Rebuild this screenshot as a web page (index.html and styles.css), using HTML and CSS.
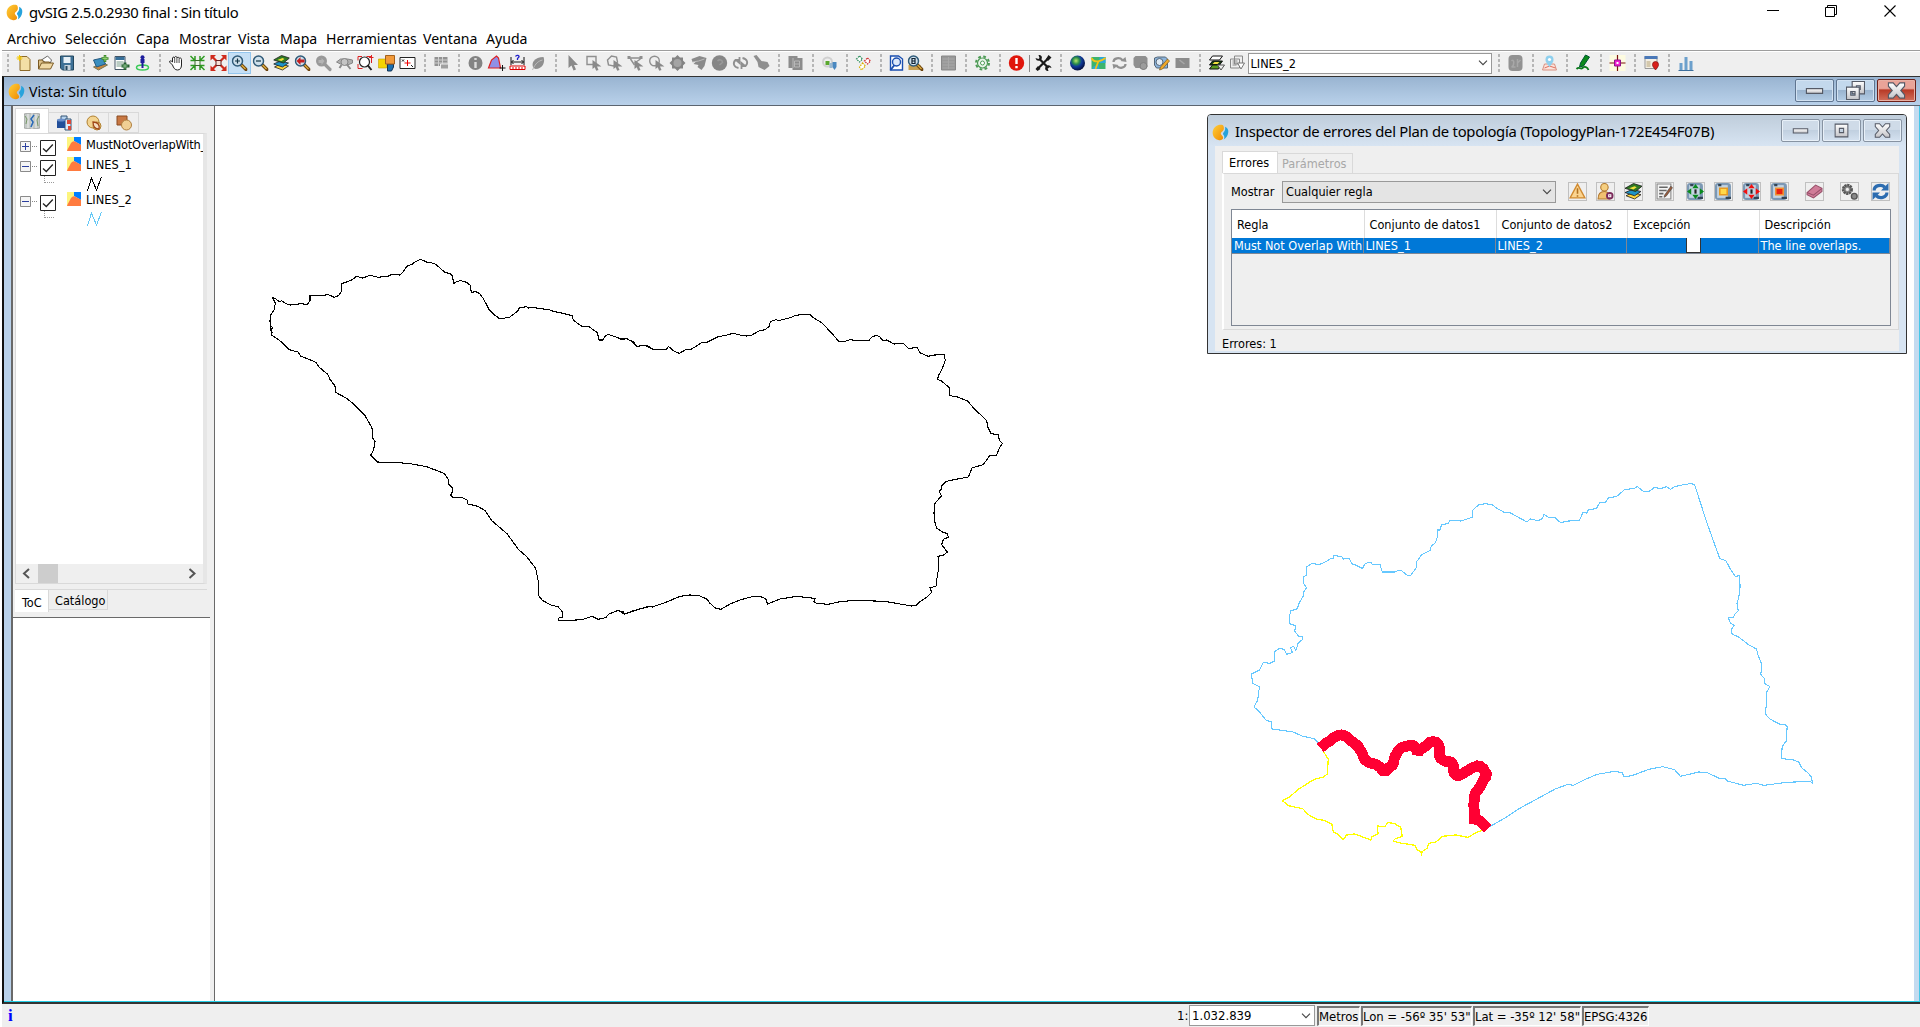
FILE: index.html
```html
<!DOCTYPE html>
<html lang="es">
<head>
<meta charset="utf-8">
<title>gvSIG 2.5.0.2930 final : Sin título</title>
<link rel="stylesheet" href="styles.css">
</head>
<body>
<svg class="defs" width="0" height="0">
<defs>
<linearGradient id="gold" x1="0" y1="0" x2="1" y2="1"><stop offset="0" stop-color="#ffcf3a"/><stop offset="1" stop-color="#f08a00"/></linearGradient>
<linearGradient id="metal" x1="0" y1="0" x2="0" y2="1"><stop offset="0" stop-color="#fff"/><stop offset="1" stop-color="#c4c4c8"/></linearGradient>
<radialGradient id="earth" cx=".4" cy=".35" r=".65"><stop offset="0" stop-color="#b8e86a"/><stop offset=".35" stop-color="#2a8c4a"/><stop offset=".6" stop-color="#103a9a"/><stop offset="1" stop-color="#051040"/></radialGradient>
<pattern id="hatch" width="2" height="2" patternUnits="userSpaceOnUse"><rect width="2" height="2" fill="#fff"/><rect width="1" height="1" fill="#22c"/><rect x="1" y="1" width="1" height="1" fill="#22c"/></pattern>
<symbol id="logo" viewBox="0 0 16 16"><path d="M9 .8C5.500.3 1.500 2.500.7 7c-.6 4 2 7.700 6 8.200 2 .2 3.800-.6 3.800-2.300C10.500 11 8.300 10.600 8.300 9s2.700-2 2.900-4.700C11.300 2.200 10.500 1 9 .8z" fill="url(#gold)"/><path d="M12.300 2.500c2.400 1 3.300 3 3 5.300-.4 3.200-2.200 5.800-4.200 6.700.8-1.500.7-3-.4-4.300-.8-1.100-.3-1.700.5-2.700 1.100-1.300 1.500-3 1.100-5z" fill="#27a3dc"/></symbol>
<symbol id="mag" viewBox="0 0 16 16"><path d="M9.500 9.500l5 5" stroke="#6e4510" stroke-width="3.200" stroke-linecap="round"/><path d="M10 10l4 4" stroke="#e0b040" stroke-width="1.300"/><circle cx="6" cy="6" r="5" fill="#cfe0ec" stroke="#2f5a78" stroke-width="1.500"/></symbol>
<symbol id="layers" viewBox="0 0 16 16"><path d="M1 12l6-3 8 2-6 4z" fill="#ffd83c" stroke="#222" stroke-width=".8"/><path d="M0 9l7-3 8 2-6 4z" fill="#1e94c8" stroke="#222" stroke-width=".8"/><path d="M0 5l8-4.500 8 2.500-6 5z" fill="#2f7a24" stroke="#222" stroke-width=".8"/><path d="M4 5l5-2 2 1-3 2z" fill="#f3e03c"/></symbol>
<symbol id="arrow" viewBox="0 0 16 16"><path d="M4 0v13l3-2.500 2 5 2.500-1-2-4.500h4z" fill="#8a8a8a"/></symbol>
<symbol id="sarrow" viewBox="0 0 16 16"><path d="M7 5v9l2.200-1.800 1.500 3.600 2.300-.8-1.500-3.500H16z" fill="#8a8a8a"/></symbol>
<symbol id="symb" viewBox="0 0 14 14"><path d="M0 0h7v14H0z" fill="#fdf57e"/><path d="M7 0h7v8L7 4z" fill="#0080ff"/><path d="M0 14c1-3 2-4 3-6 1-3 4-5 6-3 1 1 3 1 5 3v6z" fill="#ff7b3f"/></symbol>
<symbol id="zig" viewBox="0 0 16 14"><path d="M.5 14L4.500 1l5 12L14.500 0" fill="none" stroke="currentColor" shape-rendering="crispEdges"/></symbol>
<symbol id="plus" viewBox="0 0 11 11"><path d="M.5.5h10v10H.5z" fill="#f5f5f5" stroke="#8a8a8a"/><path d="M2 5.500h7M5.500 2v7" stroke="#2b3f9e"/></symbol>
<symbol id="minus" viewBox="0 0 11 11"><path d="M.5.5h10v10H.5z" fill="#f5f5f5" stroke="#8a8a8a"/><path d="M2 5.500h7" stroke="#2b3f9e"/></symbol>
<symbol id="check" viewBox="0 0 16 16"><path d="M.5.5h15v15H.5z" fill="#fff" stroke="#222"/><path d="M3 8.500l3.300 3 6.500-7" fill="none" stroke="#222" stroke-width="1.300"/></symbol>
<symbol id="chev" viewBox="0 0 10 6"><path d="M1 .7l4 4 4-4" fill="none" stroke="#444" stroke-width="1.100"/></symbol>
<symbol id="wmin" viewBox="0 0 20 20"><path d="M1.500 8h17v5h-17z" fill="url(#metal)" stroke="#555a66" stroke-width="1.200"/></symbol>
<symbol id="wmax" viewBox="0 0 20 20"><path d="M2.500 2.500h15v15h-15zM7.500 7.500v5h5v-5z" fill="url(#metal)" fill-rule="evenodd" stroke="#555a66" stroke-width="1.200"/></symbol>
<symbol id="wrest" viewBox="0 0 20 20"><path d="M6.500.5h13v13h-13zM11 5v4h4V5z" fill="url(#metal)" fill-rule="evenodd" stroke="#555a66" stroke-width="1.200"/><path d="M.5 6.500h13.500v13H.5zM5 11v4h4.500v-4z" fill="url(#metal)" fill-rule="evenodd" stroke="#555a66" stroke-width="1.200"/></symbol>
<symbol id="wx" viewBox="0 0 20 20"><path d="M1.500 2h5L10 6l3.500-4h5v3.500L14.500 10l4 4.500V18h-5L10 14l-3.500 4h-5v-3.500l4-4.500-4-4.500z" fill="url(#metal)" stroke="#555a66" stroke-width="1.200"/></symbol>
<symbol id="film" viewBox="0 0 16 16"><rect x="0" y="0" width="15" height="16" rx="3" fill="#7c98b4"/><path d="M2 2h10v12H2z" fill="#c4d4e2"/><path d="M3 2h3M10 14h5" stroke="#345" stroke-width="2"/></symbol>
</defs>
</svg>
<div class="app">
  <header class="titlebar">
    <svg class="logo"><use href="#logo"/></svg>
    <span>gvSIG 2.5.0.2930 final : Sin título</span>
    <svg class="winctl" viewBox="0 0 150 24"><path d="M17 10.500h12" stroke="#000"/><path d="M75.500 7.500h9v9h-9zM77.500 7V5.500h9v9H85" fill="none" stroke="#000"/><path d="M134.500 5.500l11 11m0-11l-11 11" stroke="#000" stroke-width="1.100"/></svg>
  </header>
  <nav class="menu"><span style="width:58px">Archivo</span><span style="width:71px">Selección</span><span style="width:43px">Capa</span><span style="width:59px">Mostrar</span><span style="width:42px">Vista</span><span style="width:46px">Mapa</span><span style="width:97px">Herramientas</span><span style="width:63px">Ventana</span><span>Ayuda</span></nav>
  <div class="toolbar">
    <div class="grp">
      <svg viewBox="0 0 16 16"><path d="M3.500 1.500h7l3 3v11h-10z" fill="#f3dfa6" stroke="#8c6a2a"/><path d="M3 0v6M0 3h6M1 1l4 4m0-4L1 5" stroke="#f4c800"/></svg>
      <svg viewBox="0 0 16 16"><path d="M4 5l6-4 4 4-2 5z" fill="#fff" stroke="#666"/><path d="M1 14V5h4l1 2h6v3" fill="#dcc088" stroke="#7a5a24"/><path d="M1 14l3-6h12l-3 6z" fill="#efd8a4" stroke="#7a5a24"/></svg>
      <svg viewBox="0 0 16 16"><path d="M2 1h13v14H4l-2-2z" fill="#3e7196" stroke="#24485f"/><path d="M5 2h7v6H5z" fill="#e8f1f7"/><path d="M6 10h6v5H6z" fill="#c7d4dd"/><path d="M7 11h2v4H7z" fill="#24485f"/></svg>
    </div>
    <div class="grp">
      <svg viewBox="0 0 16 16"><path d="M1 12l10-4 4 2-9 5z" fill="#c98840" stroke="#775"/><path d="M1 5l9-2 3 6-9 3z" fill="#3a8fc0" stroke="#265a80"/><path d="M12.500 0v7M9 3.500h7" stroke="#3f8a2a" stroke-width="2.600"/><path d="M12.500 1v5M10 3.500h5" stroke="#8fd070"/></svg>
      <svg viewBox="0 0 16 16"><path d="M1.500 1.500h10v13h-10z" fill="#fff" stroke="#456"/><path d="M2 2h9v3H2z" fill="#38709a"/><path d="M3 7h7M3 9h7M3 11h5" stroke="#798"/><path d="M11.500 7.500v7.500M8 11h8" stroke="#245f30" stroke-width="2.800"/><path d="M11.500 9v4.500M9 11h5" stroke="#8fc890"/></svg>
      <svg viewBox="0 0 16 16"><ellipse cx="8" cy="12.500" rx="6" ry="2.500" fill="none" stroke="#3ccb5a" stroke-width="1.500"/><path d="M6 4h4v4H9v5H7V8H6z" fill="#1d1d9c"/><circle cx="8" cy="2.300" r="2" fill="#1d1d9c"/></svg>
    </div>
    <div class="grp">
      <svg viewBox="0 0 16 16"><path d="M4 10L1 7c0-1.500 1.500-1.500 3 0V3c.5-1.500 2-1 2 0 0-2 2.500-2 2.500 0 .5-1.300 2-1 2 .5 1-1 2.500-.5 2.500 1V10c0 3-1.500 5-4 5s-4-2-5-5z" fill="#fff" stroke="#222"/><path d="M6.200 3v5M8.400 3v5M10.600 4v4" stroke="#222" stroke-width=".8"/></svg>
      <svg viewBox="0 0 16 16"><path d="M1 1l4 4M15 1l-4 4M1 15l4-4M15 15l-4-4M5.500 1v4.500H1M10.500 1v4.500H15M5.500 15v-4.500H1M10.500 15v-4.500H15" stroke="#2f9a22" stroke-width="1.500" fill="none"/><path d="M5.500 5.500h5v5h-5z" fill="#eef8e8" stroke="#3a6a2a"/></svg>
      <svg viewBox="0 0 16 16"><path d="M1 1l5 5M15 1l-5 5M1 15l5-5M15 15l-5-5" stroke="#cf2a1c" stroke-width="2.200"/><path d="M0 0h5.500L0 5.500zM16 0h-5.500L16 5.500zM0 16h5.500L0 10.500zM16 16h-5.500L16 10.500z" fill="#cf2a1c"/><path d="M5.500 5.500h5v5h-5z" fill="#f8e0d8" stroke="#622"/></svg>
      <svg class="on" viewBox="0 0 16 16"><use href="#mag"/><path d="M3.500 6h5M6 3.500v5" stroke="#134" stroke-width="1.200"/></svg>
      <svg viewBox="0 0 16 16"><use href="#mag"/><path d="M3.500 6h5" stroke="#134" stroke-width="1.200"/></svg>
      <svg viewBox="0 0 16 16"><use href="#layers"/></svg>
      <svg viewBox="0 0 16 16"><use href="#mag"/><path d="M2 6l4-4v2.500h4v3H6V10z" fill="#c42020"/></svg>
      <svg viewBox="0 0 16 16"><path d="M9.500 9.500l5 5" stroke="#999" stroke-width="3.200" stroke-linecap="round"/><circle cx="6" cy="6" r="5.500" fill="#999"/><path d="M9 6L6 3v2H3v3h3v2z" fill="#b4b4b4"/></svg>
      <svg viewBox="0 0 16 16"><path d="M0 7l4-3h7l5 1v3l-5 2-7-1z" fill="#b0b0b0" stroke="#858585"/><path d="M5 10l-2 3M10 9l4 5" stroke="#8a8a8a" stroke-width="2"/><circle cx="8" cy="7" r="3.500" fill="#c4c4c4" stroke="#858585"/></svg>
      <svg viewBox="0 0 16 16"><path d="M.5 5.500v-4h4M9 1.500h5M.500 9v4.500H5" fill="none" stroke="#d22"/><circle cx="7" cy="7" r="5" fill="#fff" stroke="#222" stroke-width="1.200"/><path d="M10 10l4 5" stroke="#222" stroke-width="2"/><path d="M14 0v8M11.500 2.500h4.500" stroke="#d22"/></svg>
      <svg viewBox="0 0 16 16"><path d="M9 9h6v3l-2 4H9z" fill="#1d70b0" stroke="#135"/><path d="M0 4h8v9H0z" fill="#f6d400" stroke="#c0a000" stroke-width=".6"/><path d="M7 .500h9v8.500H7z" fill="#f29a3a" stroke="#a3601c"/></svg>
      <svg viewBox="0 0 16 16"><path d="M.5 2.500h15v11H.5z" fill="#fff" stroke="#222"/><path d="M8 5v6M5 8h6" stroke="#e00"/><path d="M2.500 4.500l2 2m0-2l-2 2M11.500 10l2 2" stroke="#222"/></svg>
    </div>
    <div class="grp"><svg viewBox="0 0 16 16"><path d="M1 2h13v9H1z" fill="#929292"/><path d="M1 5h13M1 8h13M5 2v9M9 2v9" stroke="#d0d0d0"/><path d="M7 9h8v5H7z" fill="#a0a0a0" stroke="#eee"/></svg></div>
    <div class="grp">
      <svg viewBox="0 0 16 16"><circle cx="8" cy="8" r="7" fill="#848484"/><path d="M8 3v2M8 7v6" stroke="#ddd" stroke-width="2.400"/></svg>
      <svg viewBox="0 0 16 16"><path d="M0 13L3 5l5-4 2 2 2 10z" fill="url(#hatch)" stroke="#e02020" stroke-width="1.200"/><path d="M14 10v6M11 13h6" stroke="#111"/></svg>
      <svg viewBox="0 0 16 16"><path d="M6 1.500c1-2 4-1 3.500.5L8 3.500V5" fill="none" stroke="#22c" stroke-width="1.300"/><path d="M1.500 2v8M14.500 2v8M2 7h12M4 5L2 7l2 2M12 5l2 2-2 2" fill="none" stroke="#111"/><path d="M.500 11h15v3.500H.500z" fill="#fff" stroke="#d00"/><path d="M3.500 12v2M6.500 12v2M9.500 12v2M12.500 12v2" stroke="#d00"/></svg>
      <svg viewBox="0 0 16 16"><path d="M3 13C0 8 4 2 13 2c2 5-1 12-8 12z" fill="#8f8f8f"/><path d="M2 15C5 8 8 6 12 5" stroke="#bbb" fill="none"/></svg>
    </div>
    <div class="grp">
      <svg viewBox="0 0 16 16"><use href="#arrow"/></svg>
      <svg viewBox="0 0 16 16"><path d="M1.500 1.500h9v8h-9z" fill="none" stroke="#8f8f8f" stroke-width="1.400"/><use href="#sarrow"/></svg>
      <svg viewBox="0 0 16 16"><path d="M2 10L1 5l4-4 5 1 1 5-4 4z" fill="none" stroke="#8f8f8f" stroke-width="1.400"/><use href="#sarrow"/></svg>
      <svg viewBox="0 0 16 16"><path d="M2 3h11M3 4l4 6M13 4L7 8" fill="none" stroke="#8f8f8f" stroke-width="1.400"/><path d="M0 1h3v3H0zM12 1h3v3h-3z" fill="#8f8f8f"/><use href="#sarrow"/></svg>
      <svg viewBox="0 0 16 16"><circle cx="6" cy="6" r="4.800" fill="none" stroke="#8f8f8f" stroke-width="1.400"/><use href="#sarrow"/></svg>
      <svg viewBox="0 0 16 16"><path d="M8 0l2.500 2.500h3v3L16 8l-2.500 2.500v3h-3L8 16l-2.500-2.500h-3v-3L0 8l2.500-2.500v-3h3z" fill="#848484"/><circle cx="8" cy="8" r="4" fill="#a4a4a4"/></svg>
      <svg viewBox="0 0 16 16"><path d="M1 4l8-3 7 2-2 8-3 4-4-3 1-2-5-1 2-2H2z" fill="#8a8a8a"/><path d="M2 7l6-1 6-2" stroke="#bbb" fill="none"/></svg>
      <svg viewBox="0 0 16 16"><circle cx="8" cy="8" r="7.700" fill="#868686"/><path d="M6 6c2-2 5-1 5 1.500L8 10" stroke="#999" stroke-width="1.600" fill="none"/></svg>
      <svg viewBox="0 0 16 16"><path d="M6 13C1 12 0 8 3 5l4 0M10 3c5 1 6 5 3 8l-4 0M7 2v6L3.500 5M9 14V8l3.500 3" fill="none" stroke="#8f8f8f" stroke-width="1.800"/></svg>
      <svg viewBox="0 0 16 16"><path d="M0 1l3-1 5 6 6 1 2 4-5 4-6-3-1-5z" fill="#8f8f8f"/></svg>
    </div>
    <div class="grp"><svg viewBox="0 0 16 16"><path d="M1 1h9v2h5v12H5v-2H1z" fill="#8c8c8c"/><path d="M5.500 13V3M7 6h5v6H7zM7 9h5" fill="none" stroke="#b8b8b8"/></svg></div>
    <div class="grp"><svg viewBox="0 0 16 16"><circle cx="6" cy="7" r="4.500" fill="#eee" stroke="#d0d0d0" stroke-width="2"/><path d="M4 6h4v4H4z" fill="#5aa82e"/><path d="M8 8h3v5H8z" fill="#9ab8d0"/><path d="M11 7h4v5l-2 3-2-3z" fill="#4a88c0"/></svg></div>
    <div class="grp"><svg viewBox="0 0 16 16" fill="#fff" stroke-dasharray="1.500 1" stroke-width="1.200"><path d="M4 1l3 3-3 3-3-3z" stroke="#285"/><path d="M12 3l3 3-3 3-3-3z" stroke="#c22"/><path d="M7 8l3 3-4 4-2-3z" stroke="#d9b000"/></svg></div>
    <div class="grp narrow">
      <svg viewBox="0 0 16 16"><path d="M2 1h8l4 3v11H2z" fill="#fff" stroke="#1b4fb0" stroke-width="1.400"/><circle cx="8" cy="7" r="4" fill="#dce8fa" stroke="#1b4fb0" stroke-width="1.400"/><path d="M6 10l-4 5" stroke="#1b4fb0" stroke-width="2"/></svg>
      <svg viewBox="0 0 16 16"><path d="M1 10h12v5H1z" fill="#c9a050"/><use href="#mag"/><path d="M4.500 3.500v5h3v-5zM4.500 6h3" fill="none" stroke="#123" stroke-width="1.200"/></svg>
    </div>
    <div class="grp"><svg viewBox="0 0 16 16"><path d="M1 1h14v14H1z" fill="#989898" stroke="#888"/><path d="M2 4h12M2 7h12M2 10h12M2 13h12M8 2v12" stroke="#a8a8a8"/></svg></div>
    <div class="grp"><svg viewBox="0 0 16 16"><circle cx="8" cy="8" r="6.500" fill="none" stroke="#4c9a54" stroke-width="2" stroke-dasharray="2.700 2.400"/><circle cx="8" cy="8" r="5" fill="#eaf4ea" stroke="#4c9a54" stroke-width="1.200"/><circle cx="8" cy="8" r="2" fill="#fff" stroke="#4c9a54"/></svg></div>
    <div class="grp">
      <svg viewBox="0 0 16 16"><circle cx="8" cy="8" r="7.700" fill="#e0160c"/><path d="M8 3v6M8 11v2.200" stroke="#fff" stroke-width="2.400"/></svg><i class="bar"></i>
      <svg viewBox="0 0 16 16"><path d="M4 4l9 9M12 4l-9 9" stroke="#1a1a1a" stroke-width="2.200"/><path d="M0 3l3 1 1-1-1-3c3 0 4 2 3 4S1 7 0 3zM16 13l-3-1-1 1 1 3c-3 0-4-2-3-4s5-3 6 1zM10.500 4L13 0l3 2.500L12.500 6zM0 14l2 2 3-2-2.500-3z" fill="#1a1a1a"/></svg>
    </div>
    <div class="grp">
      <svg viewBox="0 0 16 16"><circle cx="8" cy="8" r="7.500" fill="url(#earth)"/></svg>
      <svg viewBox="0 0 16 16"><path d="M1 2h14v12H1z" fill="#3cb46c"/><path d="M9 2h6v6H9zM2 12l6-3 1 5H2z" fill="#2aa8d8"/><path d="M1 3c3 6 10 3 14 0M5 14l3-8" stroke="#f2c218" fill="none" stroke-width="1.800"/></svg>
      <svg viewBox="0 0 16 16"><path d="M2 7c0-4 6-5 9-2M14 9c0 4-6 5-9 2" fill="none" stroke="#909090" stroke-width="2.200"/><path d="M9 6l6 1-1-5zM7 10l-6-1 1 5z" fill="#909090"/></svg>
      <svg viewBox="0 0 16 16"><path d="M1 3l2-2h10l2 2v9l-4 3-4-2H3l-2-3z" fill="#8f8f8f"/><circle cx="11" cy="11" r="3.500" fill="#9c9c9c" stroke="#808080"/></svg>
      <svg viewBox="0 0 16 16"><path d="M1 3l3-1h8l2 2v9H3l-2-3z" fill="#8cb4dc" stroke="#567"/><circle cx="6" cy="7" r="3.500" fill="#dfeaf4" stroke="#567"/><path d="M14 4l2 2-7 8-3 1 1-3z" fill="#f0a828" stroke="#7a5a20" stroke-width=".7"/></svg>
      <svg viewBox="0 0 16 16"><path d="M1 3h14v10H1z" fill="#8c8c8c"/><path d="M5 5l5 4" stroke="#a8a8a8" stroke-width="1.500"/></svg>
    </div>
    <div class="grp">
      <svg viewBox="0 0 16 16"><path d="M4 1h10l-3 4H1z" fill="#fff" stroke="#111"/><path d="M4 6h10l-3 4H1z" fill="#123c12" stroke="#111"/><path d="M6 7h5l-2 2H4z" fill="#f4e040"/><path d="M4 10h8l-2 4H1z" fill="#5b9a22" stroke="#111"/><path d="M9 10h7l-3.500 5z" fill="#eee" stroke="#555"/></svg>
      <svg viewBox="0 0 16 16"><path d="M5 1h8v8H5zM1 4h9v9H1z" fill="#eee" stroke="#888"/><path d="M3 6h5M3 8h5M3 10h4" stroke="#888"/><path d="M8 8h7l-3.500 6z" fill="#fff" stroke="#777"/></svg>
      <div class="combo"><span>LINES_2</span><svg class="chev"><use href="#chev"/></svg></div>
    </div>
    <div class="grp"><svg viewBox="0 0 16 16"><rect x="1" y="0" width="14" height="16" rx="4" fill="#929292"/><path d="M4 6c3-3 3 5 0 6h4M10 4v8M10 8l3-3" fill="none" stroke="#a8a8a8" stroke-width="1.500"/></svg></div>
    <div class="grp"><svg viewBox="0 0 16 16"><path d="M3 9h10l2 6H1z" fill="#fbe4dc" stroke="#d89080"/><path d="M3 13l5-2 6 2" stroke="#e07060" fill="none"/><path d="M8 12C4 7 4 6 4 4.500a4 4 0 018 0C12 6 12 7 8 12z" fill="#8fd0ee"/><circle cx="8" cy="4.500" r="1.600" fill="#fff"/></svg></div>
    <div class="grp"><svg viewBox="0 0 16 16"><path d="M10 0l4 2-6 9-4 1 1-4z" fill="#0a8a1a" stroke="#053"/><path d="M1 14c3-3 4 1 6-1s5-1 6 2" fill="none" stroke="#0a7a1a" stroke-width="1.800"/></svg></div>
    <div class="grp"><svg viewBox="0 0 16 16"><path d="M0 0h16v16H0z" fill="#fdfbe0"/><path d="M8 0v16M0 8h16" stroke="#7a1010" stroke-width="1.200"/><path d="M5 5h6v6H5z" fill="#f020d0" stroke="#90108a"/><path d="M7 7h2v2H7z" fill="#fff"/></svg></div>
    <div class="grp"><svg viewBox="0 0 16 16"><path d="M1.500 1.500h12v12h-12z" fill="#f4efe4" stroke="#999"/><path d="M1 1h13v3H1z" fill="#4a78b8"/><path d="M3 6h4v6H3z" fill="#d4c8ac"/><path d="M12 15c-3-4-3-4-3-5.500a3 3 0 016 0c0 1.500 0 1.500-3 5.500z" fill="#d8201a" stroke="#801010" stroke-width=".7"/></svg></div>
    <div class="grp"><svg viewBox="0 0 16 16"><path d="M2 8h3v7H2zM7 2h3v13H7zM12 6h3v9h-3z" fill="#6ca0cc"/><path d="M1 15.500h15" stroke="#3d6f9c"/></svg></div>
  </div>
  <main class="desk">
    <div class="vhead">
      <svg class="logo"><use href="#logo"/></svg><span class="vtitle">Vista: Sin título</span>
      <div class="wb"><svg><use href="#wmin"/></svg></div><div class="wb"><svg><use href="#wrest"/></svg></div><div class="wb red"><svg><use href="#wx"/></svg></div>
    </div>
    <div class="vbody">
      <aside class="side">
        <section class="tocpane">
          <div class="icontabs">
            <span class="act"><svg viewBox="0 0 16 16"><path d="M0 1l4-1 4 1 4-1 4 1v14l-4 1-4-1-4 1-4-1z" fill="#c3c9c6" stroke="#888" stroke-width=".6"/><path d="M4 1v14M8 1v14M12 1v14" stroke="#eee"/><path d="M1 3l2 3-1 5M15 3l-2 4 1 6" stroke="#7a9a6a" fill="none"/><path d="M10 2l-3 4 2 3-2 5" stroke="#2a6ab8" stroke-width="1.600" fill="none"/></svg></span>
            <span><svg viewBox="0 0 16 16"><path d="M5 1h6v4H5z" fill="#b8d4ee" stroke="#357"/><path d="M9 4h6v11H9z" fill="#ddeafa" stroke="#357"/><path d="M11 5h4v4h-4zM12 11h3v4h-3z" fill="#d84a3a"/><path d="M1 5h8v8H1z" fill="#234f9a"/><ellipse cx="5" cy="5" rx="4" ry="1.500" fill="#6a90cc"/></svg></span>
            <span><svg viewBox="0 0 16 16"><circle cx="7" cy="7" r="6" fill="#f3d490" stroke="#b08030"/><circle cx="11" cy="11" r="4" fill="#f3d490" stroke="#b08030"/><path d="M7 7c5 0 7 3 6 7-5 0-6-3-6-7z" fill="#f6dcc0" stroke="#a04818" stroke-width="1.300"/></svg></span>
            <span><svg viewBox="0 0 16 16"><path d="M1 1h10v9H1z" fill="#c87844" stroke="#8a4a20"/><circle cx="10.500" cy="10" r="5" fill="#f0cf94" stroke="#b08040"/></svg></span>
          </div>
          <div class="tree">
            <div class="row r1"><svg class="ex"><use href="#plus"/></svg><i class="dot"></i><svg class="ck"><use href="#check"/></svg><svg class="sy"><use href="#symb"/></svg><span>MustNotOverlapWith_</span></div>
            <div class="row"><svg class="ex"><use href="#minus"/></svg><i class="dot"></i><svg class="ck"><use href="#check"/></svg><svg class="sy"><use href="#symb"/></svg><span>LINES_1</span></div>
            <div class="leg"><i class="elbow"></i><svg><use href="#zig"/></svg></div>
            <div class="row"><svg class="ex"><use href="#minus"/></svg><i class="dot"></i><svg class="ck"><use href="#check"/></svg><svg class="sy"><use href="#symb"/></svg><span>LINES_2</span></div>
            <div class="leg cy"><i class="elbow"></i><svg><use href="#zig"/></svg></div>
            <div class="hscroll"><svg viewBox="0 0 187 19"><path d="M13 5l-5 4.500 5 4.500M173.500 5l5 4.500-5 4.500" fill="none" stroke="#555" stroke-width="2"/><path d="M22 0h20v19H22z" fill="#cdcdcd"/></svg></div>
          </div>
          <div class="btabs"><span class="act">ToC</span><span class="idle">Catálogo</span></div>
        </section>
        <section class="locator"></section>
      </aside>
      <div class="map">
        <svg class="lines" viewBox="215 106 1698 895" shape-rendering="crispEdges">
          <g transform="translate(250 240) scale(.33333)" class="blk">
            <polyline points="1200,321 1188,316 1160,319 1146,305 1130,296 1117,298 1075,283 1066,288 1058,300 1047,300 1042,278 1017,260 995,258 970,241 967,227 930,218 910,214 897,209 865,205 850,202 835,204 830,200 808,203 804,212 780,231 750,237 735,226 717,208 700,176 688,160 678,155 664,157 661,136 650,127 632,122 622,124 612,130 605,103 583,96 567,81 553,70 532,67 512,58 493,67 488,72 470,79 459,96 450,105 427,103 415,108 385,112 360,106 338,114 320,109 303,121 275,131 274,155 265,167 253,172 235,164 212,167 196,166 180,167 180,181 172,194 155,191 122,195 107,191 95,182 88,185 76,176 68,173 76,190 72,210 61,226 60,243 62,262 65,285 78,294 96,307 117,329 144,336 153,349 172,356 198,367 206,380 233,403 240,418 255,438 257,457 290,475 312,493 344,525 366,564 369,595 375,605 371,630 362,645 382,666 440,668 475,670 530,680 582,700 595,718 596,732 606,742 607,756 602,766 610,773 634,772 651,780 654,792 684,799 705,812 725,842 771,881 805,928 830,950 857,985 865,1025 865,1065 876,1080 900,1094 925,1101 937,1115 938,1131 927,1134 926,1141 942,1142 996,1139 1027,1129 1044,1138 1067,1133 1077,1122 1105,1111 1123,1123 1150,1112 1200,1099"/>
            <polyline points="62,258 68,262 63,272 67,278"/>
          </g>
          <g transform="translate(620 290) scale(.33333)" class="blk">
            <polyline points="0,147 18,146 40,155 50,169 75,166 100,178 140,178 145,169 163,184 178,190 195,180 215,177 245,158 258,158 295,140 317,136 340,130 360,135 380,138 396,135 418,122 436,119 447,109 451,95 468,89 475,92 515,82 525,76 555,73 570,74 580,83 606,99 633,127 657,155 675,154 690,149 705,151 747,151 757,140 770,136 780,141 788,151 800,150 822,162 850,160 865,175 892,173 899,188 925,199 943,195 972,194 976,211 968,233 955,258 953,269 963,272 987,292 990,317 1012,321 1043,333 1063,357 1085,377 1100,392 1104,412 1113,431 1135,434 1138,451 1147,460 1138,475 1130,495 1108,498 1098,513 1089,524 1056,534 1045,561 1013,567 979,574 966,586 964,597 958,604 964,618 945,640 942,667 943,690 950,714 965,725 982,731 985,742 970,748 965,764 982,786 970,796 954,799 957,828 950,870 948,889 930,893 935,907 920,922 900,935 888,947 875,948 800,935 765,933 695,932 660,935 624,943 590,940 582,935 585,925 530,919 480,927 443,942 437,926 424,921 400,919 360,930 330,942 303,958 286,954 270,940 262,928 240,918 210,915 180,919 140,936 97,951 82,950 13,972 9,965 0,964"/>
          </g>
          <g transform="translate(1230 470) scale(.38265 .33333)">
            <polyline class="blu" points="235,824 220,806 188,798 165,786 110,777 108,756 94,750 77,726 64,712 66,702 72,693 77,650 59,640 56,612 77,600 87,577 104,580 116,573 117,545 129,535 142,538 148,553 163,548 158,533 166,529 172,542 178,520 190,508 190,499 180,500 169,483 172,467 157,462 155,445 158,423 176,416 181,398 191,379 191,368 200,354 193,341 193,320 200,316 201,290 213,281 235,283 252,274 264,265 270,265 271,257 292,259 296,267 312,266 318,281 330,286 346,295 354,280 368,277 372,283 392,284 398,306 430,306 440,301 448,302 463,316 472,316 487,293 488,275 501,254 523,241 526,228 537,218 543,196 542,180 549,180 553,164 570,161 575,152 604,153 633,142 635,120 650,104 668,101 685,104 700,117 717,127 730,127 776,156 785,147 805,152 817,145 820,133 832,142 848,142 864,158 885,153 913,152 922,128 932,129 937,119 957,116 966,99 980,98 990,83 1010,80 1031,59 1058,55 1064,49 1080,64 1095,64 1111,51 1124,57 1140,50 1151,58 1161,50 1185,44 1203,41 1214,43 1245,154 1280,266 1296,272 1306,294 1320,319 1332,317 1333,350 1330,380 1325,400 1328,422 1318,434 1316,443 1302,443 1308,460 1318,466 1311,477 1312,493 1328,500 1345,515 1355,524 1376,537 1380,555 1390,585 1387,613 1396,625 1397,640 1411,650 1403,665 1402,700 1399,732 1410,746 1435,762 1450,763 1456,769 1454,813 1443,829 1441,866 1470,869 1486,876 1495,895 1510,908 1520,922 1522,940 1517,934 1455,937 1395,946 1376,940 1342,946 1300,933 1295,927 1277,924 1245,907 1225,906 1177,919 1162,899 1131,890 1095,898 1050,917 1030,920 1025,908 1005,904 960,913 930,927 897,946 883,943 850,957 810,982 760,1013 720,1043 680,1069"/>
            <polyline class="yel" points="244,844 257,868 254,912 245,921 220,928 176,960 155,982 137,992 152,1007 190,1016 205,1034 225,1047 247,1051 266,1062 270,1086 283,1094 296,1108 305,1095 325,1092 345,1100 368,1110 370,1101 387,1092 385,1068 405,1070 412,1057 430,1061 446,1072 450,1099 432,1106 426,1113 440,1118 483,1126 490,1140 500,1147 500,1157 502,1145 515,1135 520,1120 538,1116 555,1099 590,1095 622,1102 640,1090 664,1078"/>
            <polyline class="red" points="236,834 252,818 262,812 272,802 288,794 302,798 316,812 334,828 346,850 350,866 362,878 380,882 392,892 404,906 414,894 426,884 430,862 440,842 450,832 470,826 484,828 490,850 496,840 512,828 526,814 543,818 547,832 547,862 562,874 580,876 585,892 584,906 594,920 612,908 632,894 650,886 662,896 672,916 662,930 654,950 640,972 637,1005 640,1046"/>
            <polyline class="red" points="626,1044 650,1050 674,1076"/>
          </g>
        </svg>
        <section class="dialog">
          <div class="dhead"><svg class="logo"><use href="#logo"/></svg><span class="dtitle">Inspector de errores del Plan de topología (TopologyPlan-172E454F07B)</span>
            <div class="wb g"><svg><use href="#wmin"/></svg></div><div class="wb g"><svg><use href="#wmax"/></svg></div><div class="wb g"><svg><use href="#wx"/></svg></div></div>
          <div class="dbody">
            <div class="dtabs"><span class="act">Errores</span><span class="dis">Parámetros</span></div>
            <div class="dpanel">
              <div class="dtools">
                <label>Mostrar</label>
                <div class="dcombo"><span>Cualquier regla</span><svg class="chev"><use href="#chev"/></svg></div>
                <b><svg viewBox="0 0 16 16"><path d="M8 1l7 13H1z" fill="#fbd490" stroke="#d08a30" stroke-width="1.300"/><path d="M8 5v5M8 11.500v1.500" stroke="#b07020" stroke-width="1.500"/></svg></b>
                <b class="g9"><svg viewBox="0 0 16 16"><circle cx="7" cy="4" r="3.500" fill="#f6cf80" stroke="#b07830"/><path d="M1 15c0-6 3-7 6-7s5 2 5 7z" fill="#f0c070" stroke="#b07830"/><circle cx="12" cy="12" r="3.500" fill="#7a2a5a"/><path d="M11 11h2v2h-2z" fill="none" stroke="#fff"/></svg></b>
                <b class="g9"><svg viewBox="0 0 16 16"><use href="#layers"/></svg></b>
                <b class="g12"><svg viewBox="0 0 16 16"><path d="M1 1h13v14H1z" fill="#f4f4f4" stroke="#888"/><path d="M3 4h8M3 7h7M3 10h4M3 13h3" stroke="#666" stroke-width="1.500"/><path d="M14 3l1.500 1.500-6 8-2 1 .5-2z" fill="#9a5a3a" stroke="#444" stroke-width=".6"/></svg></b>
                <b class="g12"><svg viewBox="0 0 16 16"><use href="#film"/><path d="M8 1l3 4H5zM8 15l3-4H5zM0 8l4-3v6zM16 8l-4-3v6z" fill="#0a8a1e"/><path d="M7 6h2v4H7z" fill="#222"/></svg></b>
                <b class="g9"><svg viewBox="0 0 16 16"><use href="#film"/><path d="M4.500 5h7v6h-7z" fill="#ffd94a" stroke="#e89a20" stroke-width="1.500"/></svg></b>
                <b class="g9"><svg viewBox="0 0 16 16"><use href="#film"/><path d="M8 1l3 4H5zM8 15l3-4H5zM0 8l4-3v6zM16 8l-4-3v6z" fill="#f01010"/><path d="M7 6h2v4H7z" fill="#222"/></svg></b>
                <b class="g9"><svg viewBox="0 0 16 16"><use href="#film"/><path d="M4.500 5h7v6h-7z" fill="#e82010" stroke="#f09030" stroke-width="1.500"/></svg></b>
                <b class="g16"><svg viewBox="0 0 16 16"><path d="M1 9l8-7 6 3v3l-8 6-6-3z" fill="#d07c98" stroke="#98506a"/><path d="M1 9l6 2.500L15 5" fill="none" stroke="#98506a"/></svg></b>
                <b class="g16"><svg viewBox="0 0 16 16"><circle cx="6" cy="6" r="4" fill="#888" stroke="#555" stroke-width="2.500" stroke-dasharray="2 .6"/><circle cx="6" cy="6" r="1.500" fill="#eee"/><circle cx="12.500" cy="12.500" r="2.700" fill="#888" stroke="#555" stroke-width="1.300"/></svg></b>
                <b class="g12"><svg viewBox="0 0 16 16"><path d="M2 7c0-5 7-6 10-3M14 9c0 5-7 6-10 3" fill="none" stroke="#2c6cb0" stroke-width="3"/><path d="M8.500 7h7V0zM7.500 9H.5v7z" fill="#2c6cb0"/></svg></b>
              </div>
              <div class="table">
                <div class="th"><span>Regla</span><span>Conjunto de datos1</span><span>Conjunto de datos2</span><span>Excepción</span><span>Descripción</span></div>
                <div class="tr"><span>Must Not Overlap With</span><span>LINES_1</span><span>LINES_2</span><span class="exc"><i></i></span><span>The line overlaps.</span></div>
              </div>
            </div>
            <div class="dfoot">Errores: 1</div>
          </div>
        </section>
      </div>
      <div class="redge"></div>
    </div>
  </main>
  <footer class="status">
    <em>i</em><span class="one">1:</span><div class="scombo"><span>1.032.839</span><svg class="chev"><use href="#chev"/></svg></div>
    <span class="f" style="width:43px">Metros</span><span class="f" style="width:111px">Lon = -56º 35' 53"</span><span class="f" style="width:108px">Lat = -35º 12' 58"</span><span class="f" style="width:67px">EPSG:4326</span>
  </footer>
</div>
</body>
</html>
```
FILE: styles.css
```css
* { box-sizing: border-box; }
body { margin: 0; background: #fff; color: #000; font: 12.6px/15px "DejaVu Sans Condensed", "DejaVu Sans", sans-serif; font-stretch: condensed; overflow: hidden; }
.defs { position: absolute; }
span, label, div { white-space: nowrap; }
.app { width: 1920px; height: 1027px; display: flex; flex-direction: column; overflow: hidden; }
.logo { width: 17px; height: 17px; flex: none; }

.titlebar { height: 24px; flex: none; display: flex; align-items: center; padding-left: 6px; font: 14.8px/20px "Noto Sans", sans-serif; letter-spacing: -.38px; }
.titlebar span { margin-left: 6px; }
.winctl { width: 150px; height: 24px; margin-left: auto; margin-right: 20px; }
.menu { height: 26px; flex: none; display: flex; align-items: center; padding: 3px 0 0 7px; font: 14.1px/20px "Noto Sans", sans-serif; }

.toolbar { height: 26px; margin-left: 2px; border-top: 1px solid #9d9d9d; background: #efefef; display: flex; align-items: center; flex: none; box-shadow: inset 0 1px #fff; padding-bottom: 1px; }
.grp { display: flex; align-items: center; height: 22px; }
.grp:first-child { margin-left: -1.5px; }
.grp::before { content: ""; width: 13px; height: 21px; background: radial-gradient(circle, #b4b4b4 1.1px, transparent 1.4px) 5px 0 / 4px 5px repeat-y; }
.grp > svg { width: 21px; height: 20px; padding: 2px 2px; flex: none; overflow: visible; }
.grp > svg.on { background: #c5dff5; box-shadow: 0 0 0 1px #94c6ee; }
.grp.narrow > svg { width: 19px; padding: 2px 1px; }
.bar { width: 6px; height: 17px; border-left: 1px solid #888; margin-left: 2px; margin-right: -2px; }
.combo { width: 244px; height: 21px; border: 1px solid #999; background: #fff; display: flex; align-items: center; justify-content: space-between; padding: 0 3px 0 2px; }
.chev { width: 10px; height: 6px; flex: none; }

.desk { flex: 1; min-height: 0; margin-left: 2px; border-top: 1px solid #333; border-left: 2px solid #111; border-bottom: 2px solid #333; display: flex; flex-direction: column; background: #b9d1ea; }
.vhead { height: 29px; flex: none; display: flex; align-items: center; padding: 0 4px 0 4px; background: linear-gradient(#99b4d1, #b9d1ea); border-bottom: 1px solid #5c6570; font: 14.1px/20px "Noto Sans", sans-serif; }
.vtitle { margin-left: 4px; margin-right: auto; padding-top: 1px; }
.wb { width: 39px; height: 23px; border: 1px solid #5f7590; box-shadow: inset 0 0 0 1px #d2e2f2; background: linear-gradient(#c3d8ec 45%, #9ab4cf 50%, #b4cde6); margin-left: 2px; margin-top: -2px; display: flex; align-items: center; justify-content: center; flex: none; border-radius: 2px; }
.wb svg { width: 19px; height: 19px; }
.wb.red { background: linear-gradient(#e9a398 40%, #b83a26 48%, #d2705c); border-color: #6d1f18; box-shadow: inset 0 0 0 1px #e8b0a4; }
.wb.g { background: linear-gradient(#cfdbe8 45%, #c1d0e0 50%, #d5e2f0); border-color: #8793a2; box-shadow: inset 0 0 0 1px #e8f0f8; }
.wb.g svg { width: 17px; height: 17px; }
.vbody { flex: 1; min-height: 0; display: flex; padding-left: 7px; border-bottom: 1px solid #22cfe8; }
.side { width: 203px; flex: none; border-left: 2px solid #696969; background: #efefef; display: flex; flex-direction: column; }
.tocpane { height: 511px; flex: none; display: flex; flex-direction: column; padding: 2px 7px 0 2px; }
.icontabs { height: 25px; flex: none; display: flex; align-items: flex-end; }
.icontabs span { width: 30px; height: 21px; border: 1px solid #d9d9d9; border-left: 0; display: flex; align-items: center; justify-content: center; }
.icontabs .act { width: 34px; height: 25px; background: #fff; border-bottom: 0; border-left: 1px solid #d9d9d9; }
.icontabs svg { width: 16px; height: 16px; }
.tree { height: 451px; flex: none; background: #fff; border: 1px solid #d9d9d9; border-right-width: 4px; border-right-color: #e6e6e6; display: flex; flex-direction: column; overflow: hidden; padding-top: 3px; }
.row { display: flex; height: 20px; padding-left: 4px; flex: none; font-size: 12.7px; }
.row .ex { width: 11px; height: 11px; margin-top: 4px; flex: none; }
.dot { width: 5px; height: 0; border-top: 1px dotted #888; margin: 9px 0 0 1px; flex: none; }
.ck { width: 16px; height: 16px; margin: 3px 0 0 3px; flex: none; }
.sy { width: 14px; height: 14px; margin: 0 0 0 11px; flex: none; }
.row span { margin-left: 5px; }
.r1 span { letter-spacing: -.2px; }
.leg { display: flex; height: 15px; padding-left: 28px; flex: none; }
.leg.cy { color: #66c8f5; }
.elbow { width: 10px; height: 7px; margin-top: -1px; border: 1px dotted #999; border-width: 0 0 1px 1px; }
.leg svg { width: 16px; height: 14px; margin: 0 0 0 33px; }
.hscroll { margin-top: auto; height: 19px; background: #efefef; flex: none; }
.hscroll svg { width: 187px; height: 19px; display: block; }
.btabs { flex: 1; margin-top: 5px; display: flex; align-items: flex-start; border-top: 1px solid #d9d9d9; }
.btabs .act { background: #fff; height: 22px; width: 34px; padding: 5px 0 0 7px; border-right: 1px solid #d9d9d9; }
.btabs .idle { height: 20px; width: 59px; padding: 3px 0 0 6px; border: 1px solid #d9d9d9; border-top: 0; border-left: 0; }
.locator { flex: 1; background: #fff; border-top: 1px solid #696969; margin-right: 4px; }
.map { flex: 1; position: relative; background: #fff; border-left: 1px solid #696969; overflow: hidden; }
.lines { width: 1698px; height: 895px; display: block; }
.lines polyline { fill: none; vector-effect: non-scaling-stroke; stroke-width: 1.1px; stroke-linejoin: round; }
.blk polyline { stroke: #000; }
.lines .blu { stroke: #66c8ff; }
.lines .yel { stroke: #ff0; stroke-width: 1.3px; }
.lines .red { stroke: #ff0033; stroke-width: 10.8px; stroke-linecap: butt; stroke-linejoin: bevel; }
.redge { width: 6px; background: #c4dbf0; border-right: 1px solid #45c8e8; flex: none; }

.dialog { position: absolute; left: 992px; top: 8px; width: 700px; height: 240px; border: 1px solid #333; border-radius: 4px 4px 0 0; background: #d7e4f2; padding: 0 7px 3px 7px; display: flex; flex-direction: column; }
.dhead { height: 31px; flex: none; display: flex; align-items: center; margin: 0 -7px; padding: 3px 4px 0 4px; background: linear-gradient(#bfcddb, #d7e4f2); font: 14.8px/20px "Noto Sans", sans-serif; letter-spacing: -.26px; border-radius: 3px 3px 0 0; }
.dhead .wb { margin-top: -3px; }
.dtitle { margin-left: 6px; margin-right: auto; margin-top: -2px; }
.dbody { flex: 1; background: #efefef; padding: 5px 0 0 7px; display: flex; flex-direction: column; }
.dtabs { display: flex; align-items: flex-end; height: 22px; flex: none; }
.dtabs span { border: 1px solid #d9d9d9; border-bottom: 0; }
.dtabs .act { width: 56px; height: 22px; background: #fff; padding: 3px 0 0 6px; }
.dtabs .dis { width: 75px; height: 20px; padding: 2px 0 0 4px; color: #a8a8a8; border-left: 0; }
.dpanel { height: 157px; flex: none; border: 1px solid #d9d9d9; border-left: 2px solid #fff; padding: 6px 7px 3px 7px; }
.dtools { display: flex; align-items: center; height: 23px; }
.dtools label { width: 51px; }
.dcombo { width: 274px; height: 22px; border: 1px solid #999; background: #e4e4e4; display: flex; align-items: center; justify-content: space-between; padding: 0 3px; margin-right: 12px; flex: none; }
.dtools b { width: 19px; height: 19px; border: 1px solid #c0c0c0; flex: none; display: flex; align-items: center; justify-content: center; }
.dtools .g9 { margin-left: 9px; }
.dtools .g12 { margin-left: 12px; }
.dtools .g16 { margin-left: 16px; }
.dtools b svg { width: 17px; height: 17px; flex: none; }
.table { margin-top: 6px; height: 117px; border: 1px solid #7f8794; }
.th, .tr { display: grid; grid-template-columns: 131.5px 132px 131.5px 131.5px 1fr; }
.th { height: 28px; background: #fff; }
.th span { padding: 7px 0 0 5px; }
.th span + span { border-left: 1px solid #ddd; }
.tr { height: 16px; background: #0078d7; color: #fff; border-bottom: 1px solid #7f8794; }
.tr span { padding-left: 2px; border-right: 1px solid #7f8794; overflow: hidden; height: 15px; line-height: 15px; }
.tr .exc { display: flex; justify-content: center; }
.exc i { width: 15px; height: 15px; background: #fff; border: 1px solid #333; border-top: 0; }
.dfoot { padding-top: 6px; }

.status { height: 23px; flex: none; margin-left: 2px; background: #efefef; display: flex; align-items: center; font-size: 13px; }
.status em { font: bold 17px/20px "Liberation Serif", serif; color: #00f; width: 1175px; padding-left: 6px; flex: none; }
.one { width: 12px; }
.scombo { width: 126px; height: 21px; border: 1px solid #999; background: #fff; display: flex; align-items: center; justify-content: space-between; padding: 0 3px 0 2px; margin-right: 2px; flex: none; }
.f { height: 20px; border: 1px solid; border-color: #777 #fff #fff #777; border-width: 2px 1px 1px 2px; margin-right: 1px; padding-top: 1px; overflow: hidden; letter-spacing: -.05px; }
.f:last-child { letter-spacing: -.15px; }
```
